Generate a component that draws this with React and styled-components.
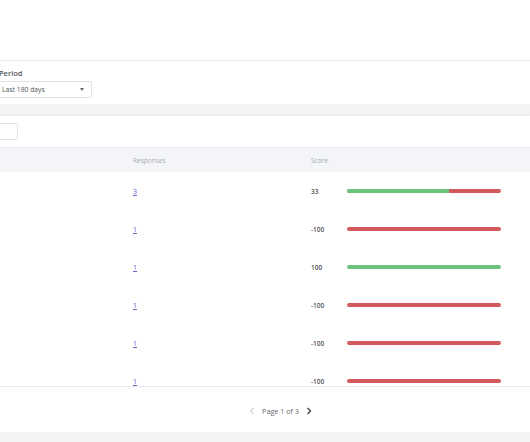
import React from 'react'
import styled, { createGlobalStyle } from 'styled-components'

const GlobalStyle = createGlobalStyle`
  html, body {
    margin: 0;
    padding: 0;
    background: #f4f4f5;
    font-family: "Open Sans", "Liberation Sans", sans-serif;
    overflow: hidden;
  }
`

const rows = [
  { responses: 3, score: 33, positive: 66.5 },
  { responses: 1, score: -100, positive: 0 },
  { responses: 1, score: 100, positive: 100 },
  { responses: 1, score: -100, positive: 0 },
  { responses: 1, score: -100, positive: 0 },
  { responses: 1, score: -100, positive: 0 },
]

function Chevron({ dir, strong }) {
  return (
    <svg width="6" height="8" viewBox="0 0 6 8">
      <path
        d={dir === 'left' ? 'M4.5 1 L1.5 4 L4.5 7' : 'M1.5 1 L4.5 4 L1.5 7'}
        fill="none"
        stroke={strong ? '#444' : '#aaa'}
        strokeWidth={strong ? 1.4 : 0.9}
      />
    </svg>
  )
}

function App() {
  return (
    <Page>
      <GlobalStyle />
      <TopBar />
      <FilterCard>
        <Field>
          <Label>Period</Label>
          <Select>
            <span>Last 180 days</span>
            <Caret />
          </Select>
        </Field>
      </FilterCard>
      <TableCard>
        <Toolbar>
          <SearchBox />
        </Toolbar>
        <HeaderRow>
          <span />
          <HeadCell>Responses</HeadCell>
          <HeadCell>Score</HeadCell>
          <span />
        </HeaderRow>
        <Body>
          {rows.map((r, i) => (
            <Row key={i}>
              <span />
              <Cell><CountLink>{r.responses}</CountLink></Cell>
              <ScoreCell>{r.score}</ScoreCell>
              <Cell>
                <Bar>
                  <Good style={{ width: `${r.positive}%` }} />
                </Bar>
              </Cell>
            </Row>
          ))}
        </Body>
        <Pager>
          <Chevron dir="left" />
          <PageText>Page 1 of 3</PageText>
          <Chevron dir="right" strong />
        </Pager>
      </TableCard>
    </Page>
  )
}

export default App

const Page = styled.div`
  width: 530px;
  height: 442px;
  overflow: hidden;
`

const TopBar = styled.div`
  height: 60px;
  background: #fff;
  border-bottom: 1px solid #eeeeee;
`

const FilterCard = styled.div`
  background: #fff;
  height: 43px;
  padding: 7px 0 0 0;
  box-sizing: border-box;
`

const Field = styled.div`
  display: flex;
  flex-direction: column;
  gap: 3px;
  margin-left: -6px;
`

const Label = styled.div`
  font-size: 7.5px;
  font-weight: 600;
  color: #555;
  padding-left: 5px;
  line-height: 10px;
`

const Select = styled.div`
  width: 98px;
  height: 17px;
  box-sizing: border-box;
  border: 1px solid #e3e3e3;
  border-radius: 2px;
  display: flex;
  align-items: center;
  justify-content: space-between;
  padding: 0 7px;
  font-size: 6.8px;
  color: #555;
`

const Caret = styled.span`
  width: 0;
  height: 0;
  border-left: 2.5px solid transparent;
  border-right: 2.5px solid transparent;
  border-top: 3px solid #666;
`

const TableCard = styled.div`
  margin-top: 12px;
  background: #fff;
  height: 316px;
  box-shadow: 0 -2px 3px rgba(0, 0, 0, 0.04);
`

const Toolbar = styled.div`
  height: 32px;
  padding-top: 7px;
  box-sizing: border-box;
  border-bottom: 1px solid #e8e9ee;
`

const SearchBox = styled.div`
  width: 24px;
  height: 17px;
  margin-left: -6px;
  box-sizing: border-box;
  border: 1px solid #e3e3e3;
  border-radius: 2px;
`

const grid = `
  display: grid;
  grid-template-columns: 133px 178px 36px 155px 1fr;
  align-items: center;
`

const HeaderRow = styled.div`
  ${grid}
  height: 24px;
  background: #f4f5f9;
`

const HeadCell = styled.div`
  font-size: 6.5px;
  color: #a9abb3;
`

const Body = styled.div`
  height: 214px;
  overflow: hidden;
  border-bottom: 1px solid #e8e9ee;
`

const Row = styled.div`
  ${grid}
  height: 38px;
`

const Cell = styled.div`
  display: flex;
  align-items: center;
`

const CountLink = styled.span`
  font-size: 7px;
  color: #6a60c4;
  text-decoration: underline;
`

const ScoreCell = styled.div`
  font-size: 6.5px;
  font-weight: 600;
  color: #555;
`

const Bar = styled.div`
  width: 154px;
  height: 4px;
  border-radius: 2px;
  background: #d35a5c;
  overflow: hidden;
  display: flex;
`

const Good = styled.div`
  height: 100%;
  background: #6cc47c;
`

const Pager = styled.div`
  height: 45px;
  box-sizing: border-box;
  padding: 3px 0 0 31px;
  display: flex;
  align-items: center;
  justify-content: center;
  gap: 5px;
`

const PageText = styled.span`
  font-size: 7.2px;
  color: #666;
  padding: 0 2px;
`
